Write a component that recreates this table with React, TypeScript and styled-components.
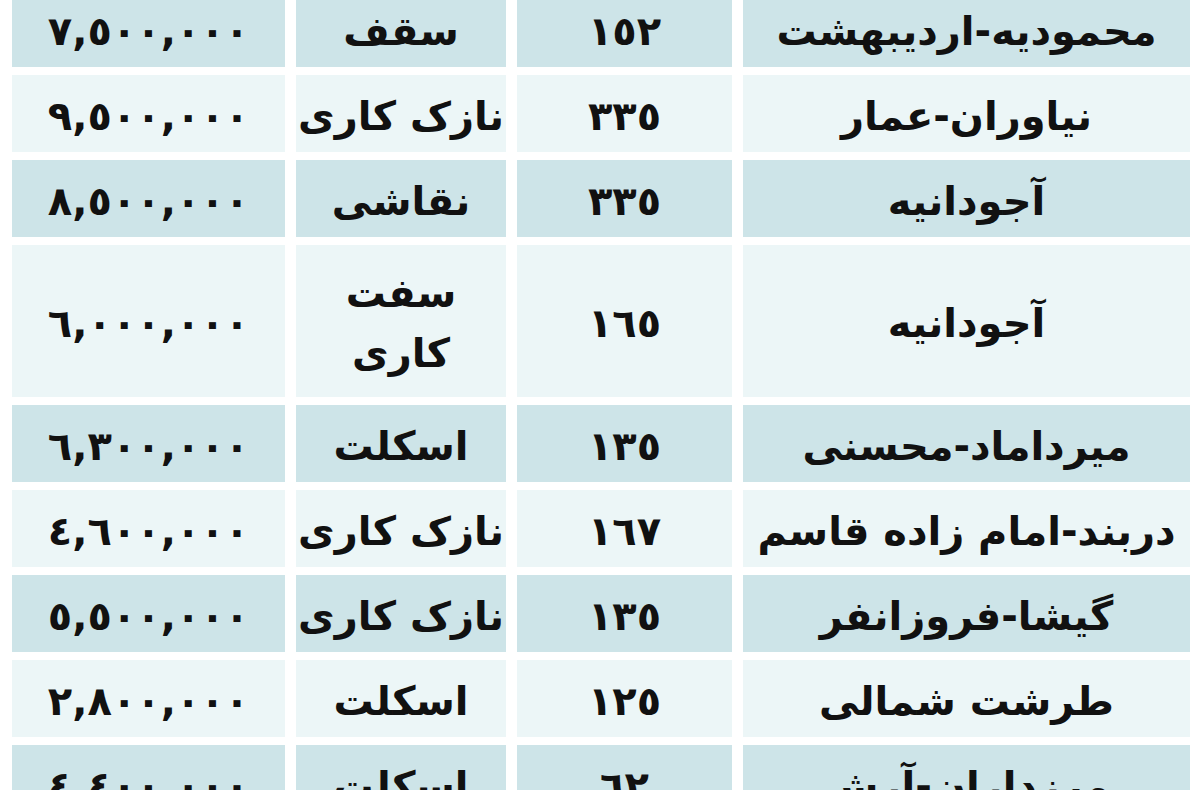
import styled, { createGlobalStyle } from 'styled-components';

interface IListing {
  price: string;
  kind: string[];
  area: string;
  place: string;
  tall?: boolean;
}

const listings: IListing[] = [
  { price: '٧,٥٠٠,٠٠٠', kind: ['سقف'], area: '١٥٢', place: 'محمودیه-اردیبهشت' },
  { price: '٩,٥٠٠,٠٠٠', kind: ['نازک کاری'], area: '٣٣٥', place: 'نیاوران-عمار' },
  { price: '٨,٥٠٠,٠٠٠', kind: ['نقاشی'], area: '٣٣٥', place: 'آجودانیه' },
  { price: '٦,٠٠٠,٠٠٠', kind: ['سفت', 'کاری'], area: '١٦٥', place: 'آجودانیه', tall: true },
  { price: '٦,٣٠٠,٠٠٠', kind: ['اسکلت'], area: '١٣٥', place: 'میرداماد-محسنی' },
  { price: '٤,٦٠٠,٠٠٠', kind: ['نازک کاری'], area: '١٦٧', place: 'دربند-امام زاده قاسم' },
  { price: '٥,٥٠٠,٠٠٠', kind: ['نازک کاری'], area: '١٣٥', place: 'گیشا-فروزانفر' },
  { price: '٢,٨٠٠,٠٠٠', kind: ['اسکلت'], area: '١٢٥', place: 'طرشت شمالی' },
  { price: '٤,٤٠٠,٠٠٠', kind: ['اسکلت'], area: '٦٢', place: 'مرزداران-آرش' },
];

const GlobalStyle = createGlobalStyle`
  html, body {
    margin: 0;
    padding: 0;
    background: #ffffff;
    overflow: hidden;
  }
`;

const App = () => {
  return (
    <>
      <GlobalStyle />
      <Table dir="rtl">
        {listings.map((item, index) => (
          <Row key={index} tall={!!item.tall}>
            <Cell shaded={index % 2 === 0}>{item.place}</Cell>
            <Cell shaded={index % 2 === 0}>
              <Number>{item.area}</Number>
            </Cell>
            <Cell shaded={index % 2 === 0}>
              <Stack>
                {item.kind.map((line) => (
                  <span key={line}>{line}</span>
                ))}
              </Stack>
            </Cell>
            <Cell shaded={index % 2 === 0}>
              <Number>{item.price}</Number>
            </Cell>
          </Row>
        ))}
      </Table>
    </>
  );
};

export default App;

const Table = styled.div`
  width: 1200px;
  height: 800px;
  box-sizing: border-box;
  padding: 0 10px 0 12px;
  margin-top: -10px;
  display: flex;
  flex-direction: column;
  gap: 8px;
  font-family: 'DejaVu Sans', 'Noto Sans', sans-serif;
  color: #111111;
`;

// 한 줄: 지역 / 면적 / 공정 / 가격
const Row = styled.div<{ tall: boolean }>`
  flex-shrink: 0;
  display: grid;
  grid-template-columns: 447px 215px 210px 273px;
  column-gap: 11px;
  height: ${({ tall }) => (tall ? '152px' : '77px')};
`;

const Cell = styled.div<{ shaded: boolean }>`
  display: flex;
  justify-content: center;
  align-items: center;
  box-sizing: border-box;
  padding-top: 4px;
  background-color: ${({ shaded }) => (shaded ? '#cde4e8' : '#ecf6f7')};
  font-size: 40px;
  font-weight: bold;
  line-height: 1.2;
  white-space: nowrap;
`;

const Number = styled.span`
  direction: ltr;
  unicode-bidi: isolate;
  letter-spacing: 3px;
`;

const Stack = styled.div`
  display: flex;
  flex-direction: column;
  align-items: center;
  line-height: 1.5;
`;
